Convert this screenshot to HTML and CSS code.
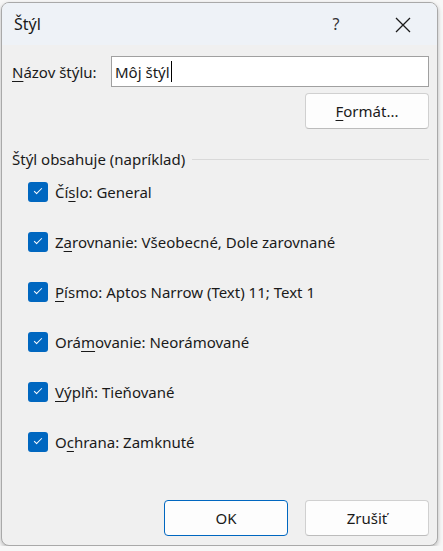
FILE: index.html
```html
<!DOCTYPE html>
<html lang="sk">
<head>
  <meta charset="UTF-8" />
  <title>Štýl</title>
  <link rel="stylesheet" href="styles.css">
</head>
<body>
  <div class="dialog">
    <div class="title-bar">
      <span class="title">Štýl</span>
      <span class="help">?</span>
      <span class="close">
        <svg width="16" height="16" viewBox="0 0 16 16"><path d="M1 1 L15 15 M15 1 L1 15" stroke="#1a1a1a" stroke-width="1.3" fill="none"/></svg>
      </span>
    </div>
    <div class="content">
      <div class="name-row">
        <label class="name-label"><u>N</u>ázov štýlu:</label>
        <div class="text-box">Môj štýl<span class="caret"></span></div>
      </div>
      <div class="format-row">
        <button class="btn"><u>F</u>ormát...</button>
      </div>
      <div class="group">
        <span class="group-label">Štýl obsahuje (napríklad)</span>
        <span class="group-line"></span>
      </div>
      <ul class="checks">
        <li><span class="box"></span>Čí<u>s</u>lo: General</li>
        <li><span class="box"></span>Z<u>a</u>rovnanie: Všeobecné, Dole zarovnané</li>
        <li><span class="box"></span><u>P</u>ísmo: Aptos Narrow (Text) 11; Text 1</li>
        <li><span class="box"></span>Orá<u>m</u>ovanie: Neorámované</li>
        <li><span class="box"></span><u>V</u>ýplň: Tieňované</li>
        <li><span class="box"></span>O<u>c</u>hrana: Zamknuté</li>
      </ul>
      <div class="actions">
        <button class="btn default">OK</button>
        <button class="btn">Zrušiť</button>
      </div>
    </div>
  </div>
</body>
</html>
```
FILE: styles.css
```css
body {
  margin: 0;
  background: #f7f7f7;
  font-family: "Noto Sans", "Open Sans", sans-serif;
  font-size: 15px;
  color: #1a1a1a;
}
.dialog {
  margin: 2px 5px 0 1px;
  height: 542px;
  border: 1px solid #a9a9a9;
  border-radius: 8px;
  background: #f0f0f0;
  box-shadow: 0 2px 4px rgba(0,0,0,0.25);
  display: flex;
  flex-direction: column;
  overflow: hidden;
}
.title-bar {
  height: 42px;
  background: #eef2f7;
  display: flex;
  align-items: center;
  padding-left: 12px;
}
.title { flex: 1; font-size: 16px; }
.help {
  width: 66px;
  text-align: center;
  font-size: 16px;
  color: #333;
}
.close {
  width: 68px;
  display: flex;
  justify-content: center;
  padding-top: 2px;
}
.content {
  flex: 1;
  padding: 11px 8px 0 10px;
  display: flex;
  flex-direction: column;
}
u { text-decoration-thickness: 1px; text-underline-offset: 3px; }
.name-row {
  display: flex;
  align-items: center;
}
.name-label { width: 99px; }
.text-box {
  flex: 1;
  height: 31px;
  box-sizing: border-box;
  background: white;
  border: 1px solid #a0a0a0;
  padding: 0 3px;
  display: flex;
  align-items: center;
}
.caret {
  display: inline-block;
  width: 1px;
  height: 21px;
  background: #000;
  margin-left: 1px;
}
.format-row {
  display: flex;
  justify-content: flex-end;
  margin-top: 6px;
}
.btn {
  width: 124px;
  height: 36px;
  font: inherit;
  color: #1a1a1a;
  background: #fdfdfd;
  border: 1px solid #d0d0d0;
  border-bottom-color: #bcbcbc;
  border-radius: 4px;
}
.btn.default { border-color: #0067c0; }
.group {
  display: flex;
  align-items: center;
  margin-top: 20px;
  gap: 7px;
}
.group-line {
  flex: 1;
  border-top: 1px solid #d9d9d9;
}
.checks {
  list-style: none;
  margin: 12px 0 0 0;
  padding: 0 0 0 16px;
  display: flex;
  flex-direction: column;
  gap: 29px;
}
.checks li {
  display: flex;
  align-items: center;
  height: 21px;
}
.box {
  width: 20px;
  height: 20px;
  border-radius: 3px;
  background: #0067c0;
  margin-right: 7px;
  position: relative;
}
.box::after {
  content: "";
  position: absolute;
  left: 6px;
  top: 6px;
  width: 7px;
  height: 3px;
  border-left: 1.2px solid white;
  border-bottom: 1.2px solid white;
  transform: rotate(-45deg);
}
.actions {
  margin-top: auto;
  margin-bottom: 9px;
  display: flex;
  justify-content: flex-end;
  gap: 17px;
}
```
